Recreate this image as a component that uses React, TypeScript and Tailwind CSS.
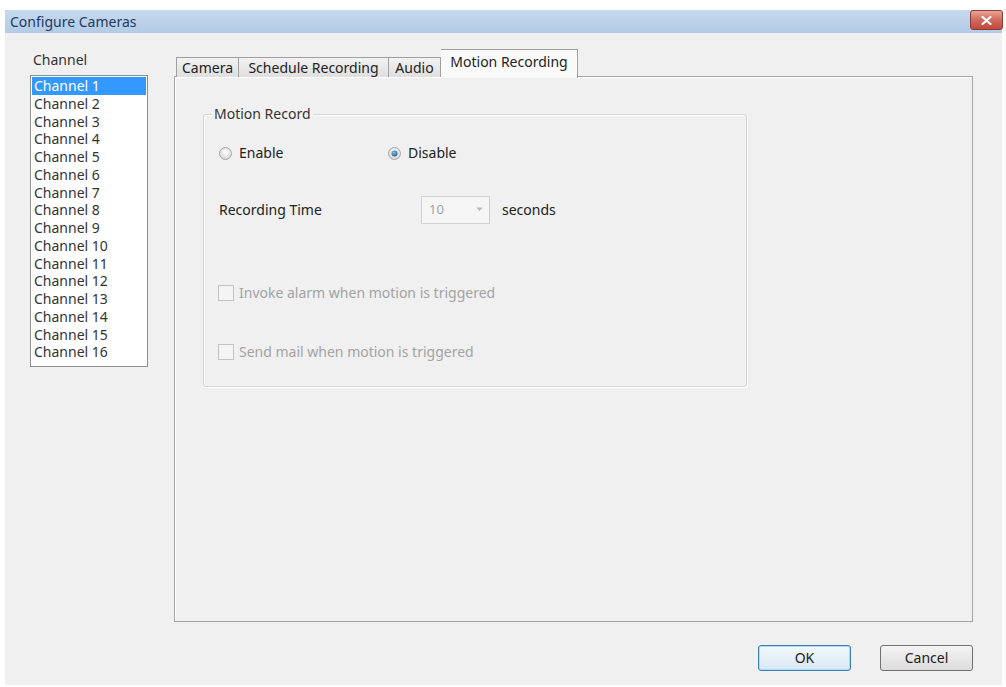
import React from "react";

const channels = Array.from({ length: 16 }, (_, i) => `Channel ${i + 1}`);

function Radio({ checked }: { checked: boolean }) {
  return (
    <svg width="13" height="13" viewBox="0 0 13 13" className="shrink-0">
      <defs>
        <radialGradient id={checked ? "rg1" : "rg0"} cx="50%" cy="40%" r="60%">
          <stop offset="0%" stopColor="#ffffff" />
          <stop offset="100%" stopColor="#d4d4d4" />
        </radialGradient>
        <radialGradient id="dot" cx="40%" cy="35%" r="70%">
          <stop offset="0%" stopColor="#8cc0e8" />
          <stop offset="100%" stopColor="#1f5a8a" />
        </radialGradient>
      </defs>
      <circle cx="6.5" cy="6.5" r="6" fill={`url(#${checked ? "rg1" : "rg0"})`} stroke="#a6a6a6" strokeWidth="1" />
      {checked && <circle cx="6.5" cy="6.5" r="3" fill="url(#dot)" />}
    </svg>
  );
}

function CheckBox() {
  return <div className="w-[16px] h-[16px] shrink-0 border border-[#c4c4c4] bg-[#f4f4f4]" />;
}

export default function App() {
  return (
    <div
      className="w-[1006px] h-[687px] bg-white pt-[10px] pl-[5px] pr-[4px] pb-[2px] text-[14px] text-[#222]"
      style={{ fontFamily: '"Noto Sans", "Open Sans", sans-serif' }}
    >
      <div className="flex flex-col h-full bg-[#f0f0f0]">
        {/* Title bar */}
        <div className="h-[23px] flex items-start justify-between bg-gradient-to-b from-[#c6d9ee] to-[#b3cbe5]">
          <div className="pl-[5px] h-full flex items-center text-[#1e3a5f] text-[14px] leading-none">Configure Cameras</div>
          <div className="w-[33px] h-[20px] mr-[-1px] rounded-[3px] border border-[#8a3b33] bg-gradient-to-b from-[#e8a497] via-[#d06a5c] to-[#c2473b] flex items-center justify-center">
            <svg width="11" height="9" viewBox="0 0 11 9">
              <path d="M1.5 1 L9.5 8 M9.5 1 L1.5 8" stroke="#ffffff" strokeWidth="2.2" strokeLinecap="round" />
            </svg>
          </div>
        </div>

        {/* Body */}
        <div className="flex flex-col flex-1">
          <div className="flex pl-[25px]">
            {/* Left column */}
            <div className="w-[118px] flex flex-col pt-[17px]">
              <div className="h-[20px] flex items-center pl-[3px] text-[#333] leading-none">Channel</div>
              <div className="mt-[5px] h-[292px] border border-[#8e8f8f] bg-white pt-[1px] px-[1px]">
                {channels.map((c, i) => (
                  <div
                    key={c}
                    className={
                      "h-[17.75px] leading-[17.75px] pl-[2px] " +
                      (i === 0 ? "bg-[#3399ff] text-white" : "text-[#333]")
                    }
                  >
                    {c}
                  </div>
                ))}
              </div>
            </div>

            {/* Right column */}
            <div className="ml-[26px] flex flex-col pt-[16px]">
              {/* Tabs */}
              <div className="flex items-end h-[28px] pl-[2px] relative z-10">
                <div className="h-[20px] w-[63px] border border-[#a0a0a0] border-b-0 bg-gradient-to-b from-[#f2f2f2] to-[#dfdfdf] flex items-center justify-center leading-none">Camera</div>
                <div className="h-[20px] w-[150px] border border-l-0 border-[#a0a0a0] border-b-0 bg-gradient-to-b from-[#f2f2f2] to-[#dfdfdf] flex items-center justify-center leading-none">Schedule Recording</div>
                <div className="h-[20px] w-[52px] border border-l-0 border-[#a0a0a0] border-b-0 bg-gradient-to-b from-[#f2f2f2] to-[#dfdfdf] flex items-center justify-center leading-none">Audio</div>
                <div className="h-[29px] mb-[-1px] w-[137px] border border-l-0 border-[#a0a0a0] border-b-0 bg-[#fafafa] flex items-start pt-[5px] justify-center leading-none">Motion Recording</div>
              </div>
              {/* Panel */}
              <div className="w-[799px] h-[546px] border border-[#a5a5a5] bg-[#f0f0f0] shadow-[inset_1px_1px_0_#ffffff] -mt-px pl-[28px] pt-[27px]">
                <fieldset className="w-[544px] h-[283px] border border-[#d5d5d5] rounded-[3px] shadow-[inset_1px_1px_0_#ffffff,1px_1px_0_#ffffff]">
                  <legend className="ml-[8px] px-[2px] leading-[20px] text-[#333]">Motion Record</legend>
                  <div className="pl-[15px] pt-[19px] flex flex-col">
                    <div className="flex items-center h-[20px]">
                      <div className="w-[169px] flex items-center gap-[7px]">
                        <Radio checked={false} />
                        <span className="leading-none">Enable</span>
                      </div>
                      <div className="flex items-center gap-[7px]">
                        <Radio checked={true} />
                        <span className="leading-none">Disable</span>
                      </div>
                    </div>
                    <div className="flex items-center h-[29px] mt-[32px]">
                      <div className="w-[202px] leading-none">Recording Time</div>
                      <div className="w-[69px] h-[28px] border border-[#cfcfcf] bg-[#f5f5f5] flex items-center justify-between pl-[7px] pr-[6px]">
                        <span className="text-[#a3a3a3] leading-none text-[13px]">10</span>
                        <svg width="7" height="5" viewBox="0 0 7 5"><path d="M0.5 0.5 L3.5 4 L6.5 0.5 Z" fill="#b5b5b5" /></svg>
                      </div>
                      <div className="ml-[12px] leading-none">seconds</div>
                    </div>
                    <div className="flex items-center h-[16px] mt-[61px] -ml-[1px] gap-[5px]">
                      <CheckBox />
                      <span className="text-[#a3a3a3] leading-none">Invoke alarm when motion is triggered</span>
                    </div>
                    <div className="flex items-center h-[16px] mt-[43px] -ml-[1px] gap-[5px]">
                      <CheckBox />
                      <span className="text-[#a3a3a3] leading-none">Send mail when motion is triggered</span>
                    </div>
                  </div>
                </fieldset>
              </div>
            </div>
          </div>

          {/* Buttons */}
          <div className="flex justify-end gap-[29px] pr-[29px] mt-[23px]">
            <button className="w-[93px] h-[26px] rounded-[3px] border border-[#3c7fb1] bg-gradient-to-b from-[#f2f8fc] to-[#d9e8f3] shadow-[inset_0_0_0_1px_#a9dcf5] leading-none">OK</button>
            <button className="w-[93px] h-[26px] rounded-[3px] border border-[#707070] bg-gradient-to-b from-[#f4f4f4] to-[#dcdcdc] leading-none">Cancel</button>
          </div>
        </div>
      </div>
    </div>
  );
}
